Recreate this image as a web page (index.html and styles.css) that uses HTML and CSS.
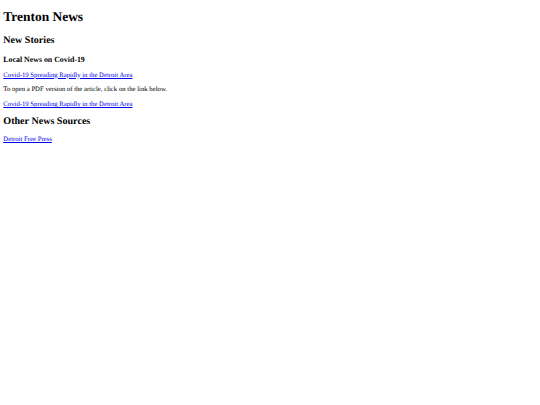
FILE: index.html
```html
<!DOCTYPE html>
<html>
<head>
<meta charset="utf-8">
<title>Trenton News</title>
<link rel="stylesheet" href="styles.css">
</head>
<body class="page">
<h1 class="title">Trenton News</h1>
<h2 class="section">New Stories</h2>
<h3 class="sub">Local News on Covid-19</h3>
<p class="para"><a class="link" href="#">Covid-19 Spreading Rapidly in the Detroit Area</a></p>
<p class="para">To open a PDF version of the article, click on the link below.</p>
<p class="para"><a class="link" href="#">Covid-19 Spreading Rapidly in the Detroit Area</a></p>
<h2 class="section">Other News Sources</h2>
<p class="para"><a class="link" href="#">Detroit Free Press</a></p>
</body>
</html>
```
FILE: styles.css
```css
html { background: #fff; }
.page {
  margin: 3.32px;
  font-family: "Liberation Serif", "Times New Roman", serif;
  font-size: 6.72px;
  color: #000;
  text-rendering: geometricPrecision;
}
.title { font-size: 2em; margin: 0.45em 0 0.75em; font-weight: bold; }
.section { font-size: 1.5em; margin: 0.83em 0; font-weight: bold; }
.sub { font-size: 1.17em; margin: 1em 0; font-weight: bold; }
.para { margin: 1.15em 0; }
.link { color: #0000ee; text-decoration: underline; }
```
